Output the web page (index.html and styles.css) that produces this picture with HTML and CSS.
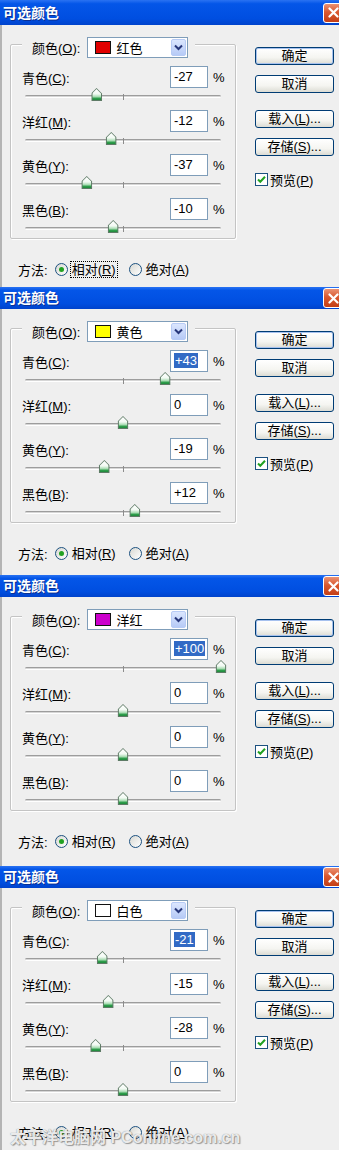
FILE: index.html
```html
<!DOCTYPE html>
<html lang="zh-CN">
<head>
  <meta charset="UTF-8">
  <meta name="viewport" content="width=device-width, initial-scale=1.0">
  <title>可选颜色</title>
  <link rel="stylesheet" href="styles.css">
</head>
<body>

  <!-- 1. 红色 -->
  <section class="dlg dlg-first">
    <div class="titlebar">
      <span class="title">可选颜色</span>
      <span class="close"><svg width="11" height="11" viewBox="0 0 11 11"><path d="M1.5 1.5 L9.5 9.5 M9.5 1.5 L1.5 9.5" stroke="#fff" stroke-width="2.2" stroke-linecap="round"/></svg></span>
    </div>
    <div class="body">
      <div class="main">
        <div class="group">
          <div class="legend">
            <span class="lbl">颜色(<u>O</u>):</span>
            <div class="select">
              <span class="swatch red"></span>
              <span class="sel-text">红色</span>
              <span class="arrow"><svg width="9" height="7" viewBox="0 0 9 7"><path d="M1 1.5 L4.5 5 L8 1.5" fill="none" stroke="#27377a" stroke-width="2"/></svg></span>
            </div>
          </div>
          <div class="rows">
            <div class="row">
              <div class="field"><span class="lbl">青色(<u>C</u>):</span><span class="input">-27</span><span class="pct">%</span></div>
              <div class="slider"><div class="track"><span class="tick"></span><span class="thumb" style="left: 36.5%"></span></div></div>
            </div>
            <div class="row">
              <div class="field"><span class="lbl">洋红(<u>M</u>):</span><span class="input">-12</span><span class="pct">%</span></div>
              <div class="slider"><div class="track"><span class="tick"></span><span class="thumb" style="left: 44%"></span></div></div>
            </div>
            <div class="row">
              <div class="field"><span class="lbl">黄色(<u>Y</u>):</span><span class="input">-37</span><span class="pct">%</span></div>
              <div class="slider"><div class="track"><span class="tick"></span><span class="thumb" style="left: 31.5%"></span></div></div>
            </div>
            <div class="row">
              <div class="field"><span class="lbl">黑色(<u>B</u>):</span><span class="input">-10</span><span class="pct">%</span></div>
              <div class="slider"><div class="track"><span class="tick"></span><span class="thumb" style="left: 45%"></span></div></div>
            </div>
          </div>
        </div>
        <div class="method">
          <span class="method-lbl">方法:</span>
          <span class="radio on"></span><span class="opt focus">相对(<u>R</u>)</span>
          <span class="radio second"></span><span class="opt">绝对(<u>A</u>)</span>
        </div>
      </div>
      <div class="side">
        <div class="btn btn-default">确定</div>
        <div class="btn">取消</div>
        <div class="btn btn-load">载入(<u>L</u>)...</div>
        <div class="btn">存储(<u>S</u>)...</div>
        <div class="check-row">
          <span class="check"><svg width="11" height="11" viewBox="0 0 11 11"><path d="M2 5.5 L4.3 7.8 L9 2.8" fill="none" stroke="#21a121" stroke-width="2"/></svg></span>
          <span class="check-lbl">预览(<u>P</u>)</span>
        </div>
      </div>
    </div>
  </section>

  <!-- 2. 黄色 -->
  <section class="dlg dlg-b">
    <div class="titlebar">
      <span class="title">可选颜色</span>
      <span class="close"><svg width="11" height="11" viewBox="0 0 11 11"><path d="M1.5 1.5 L9.5 9.5 M9.5 1.5 L1.5 9.5" stroke="#fff" stroke-width="2.2" stroke-linecap="round"/></svg></span>
    </div>
    <div class="body">
      <div class="main">
        <div class="group">
          <div class="legend">
            <span class="lbl">颜色(<u>O</u>):</span>
            <div class="select">
              <span class="swatch yellow"></span>
              <span class="sel-text">黄色</span>
              <span class="arrow"><svg width="9" height="7" viewBox="0 0 9 7"><path d="M1 1.5 L4.5 5 L8 1.5" fill="none" stroke="#27377a" stroke-width="2"/></svg></span>
            </div>
          </div>
          <div class="rows">
            <div class="row">
              <div class="field"><span class="lbl">青色(<u>C</u>):</span><span class="input"><span class="hl">+43</span></span><span class="pct">%</span></div>
              <div class="slider"><div class="track"><span class="tick"></span><span class="thumb" style="left: 71.5%"></span></div></div>
            </div>
            <div class="row">
              <div class="field"><span class="lbl">洋红(<u>M</u>):</span><span class="input">0</span><span class="pct">%</span></div>
              <div class="slider"><div class="track"><span class="tick"></span><span class="thumb" style="left: 50%"></span></div></div>
            </div>
            <div class="row">
              <div class="field"><span class="lbl">黄色(<u>Y</u>):</span><span class="input">-19</span><span class="pct">%</span></div>
              <div class="slider"><div class="track"><span class="tick"></span><span class="thumb" style="left: 40.5%"></span></div></div>
            </div>
            <div class="row">
              <div class="field"><span class="lbl">黑色(<u>B</u>):</span><span class="input">+12</span><span class="pct">%</span></div>
              <div class="slider"><div class="track"><span class="tick"></span><span class="thumb" style="left: 56%"></span></div></div>
            </div>
          </div>
        </div>
        <div class="method">
          <span class="method-lbl">方法:</span>
          <span class="radio on"></span><span class="opt">相对(<u>R</u>)</span>
          <span class="radio second"></span><span class="opt">绝对(<u>A</u>)</span>
        </div>
      </div>
      <div class="side">
        <div class="btn btn-default">确定</div>
        <div class="btn">取消</div>
        <div class="btn btn-load">载入(<u>L</u>)...</div>
        <div class="btn">存储(<u>S</u>)...</div>
        <div class="check-row">
          <span class="check"><svg width="11" height="11" viewBox="0 0 11 11"><path d="M2 5.5 L4.3 7.8 L9 2.8" fill="none" stroke="#21a121" stroke-width="2"/></svg></span>
          <span class="check-lbl">预览(<u>P</u>)</span>
        </div>
      </div>
    </div>
  </section>

  <!-- 3. 洋红 -->
  <section class="dlg dlg-c">
    <div class="titlebar">
      <span class="title">可选颜色</span>
      <span class="close"><svg width="11" height="11" viewBox="0 0 11 11"><path d="M1.5 1.5 L9.5 9.5 M9.5 1.5 L1.5 9.5" stroke="#fff" stroke-width="2.2" stroke-linecap="round"/></svg></span>
    </div>
    <div class="body">
      <div class="main">
        <div class="group">
          <div class="legend">
            <span class="lbl">颜色(<u>O</u>):</span>
            <div class="select">
              <span class="swatch magenta"></span>
              <span class="sel-text">洋红</span>
              <span class="arrow"><svg width="9" height="7" viewBox="0 0 9 7"><path d="M1 1.5 L4.5 5 L8 1.5" fill="none" stroke="#27377a" stroke-width="2"/></svg></span>
            </div>
          </div>
          <div class="rows">
            <div class="row">
              <div class="field"><span class="lbl">青色(<u>C</u>):</span><span class="input"><span class="hl">+100</span></span><span class="pct">%</span></div>
              <div class="slider"><div class="track"><span class="tick"></span><span class="thumb" style="left: 100%"></span></div></div>
            </div>
            <div class="row">
              <div class="field"><span class="lbl">洋红(<u>M</u>):</span><span class="input">0</span><span class="pct">%</span></div>
              <div class="slider"><div class="track"><span class="tick"></span><span class="thumb" style="left: 50%"></span></div></div>
            </div>
            <div class="row">
              <div class="field"><span class="lbl">黄色(<u>Y</u>):</span><span class="input">0</span><span class="pct">%</span></div>
              <div class="slider"><div class="track"><span class="tick"></span><span class="thumb" style="left: 50%"></span></div></div>
            </div>
            <div class="row">
              <div class="field"><span class="lbl">黑色(<u>B</u>):</span><span class="input">0</span><span class="pct">%</span></div>
              <div class="slider"><div class="track"><span class="tick"></span><span class="thumb" style="left: 50%"></span></div></div>
            </div>
          </div>
        </div>
        <div class="method">
          <span class="method-lbl">方法:</span>
          <span class="radio on"></span><span class="opt">相对(<u>R</u>)</span>
          <span class="radio second"></span><span class="opt">绝对(<u>A</u>)</span>
        </div>
      </div>
      <div class="side">
        <div class="btn btn-default">确定</div>
        <div class="btn">取消</div>
        <div class="btn btn-load">载入(<u>L</u>)...</div>
        <div class="btn">存储(<u>S</u>)...</div>
        <div class="check-row">
          <span class="check"><svg width="11" height="11" viewBox="0 0 11 11"><path d="M2 5.5 L4.3 7.8 L9 2.8" fill="none" stroke="#21a121" stroke-width="2"/></svg></span>
          <span class="check-lbl">预览(<u>P</u>)</span>
        </div>
      </div>
    </div>
  </section>

  <!-- 4. 白色 -->
  <section class="dlg dlg-d">
    <div class="titlebar">
      <span class="title">可选颜色</span>
      <span class="close"><svg width="11" height="11" viewBox="0 0 11 11"><path d="M1.5 1.5 L9.5 9.5 M9.5 1.5 L1.5 9.5" stroke="#fff" stroke-width="2.2" stroke-linecap="round"/></svg></span>
    </div>
    <div class="body">
      <div class="main">
        <div class="group">
          <div class="legend">
            <span class="lbl">颜色(<u>O</u>):</span>
            <div class="select">
              <span class="swatch white"></span>
              <span class="sel-text">白色</span>
              <span class="arrow"><svg width="9" height="7" viewBox="0 0 9 7"><path d="M1 1.5 L4.5 5 L8 1.5" fill="none" stroke="#27377a" stroke-width="2"/></svg></span>
            </div>
          </div>
          <div class="rows">
            <div class="row">
              <div class="field"><span class="lbl">青色(<u>C</u>):</span><span class="input"><span class="hl">-21</span></span><span class="pct">%</span></div>
              <div class="slider"><div class="track"><span class="tick"></span><span class="thumb" style="left: 39.5%"></span></div></div>
            </div>
            <div class="row">
              <div class="field"><span class="lbl">洋红(<u>M</u>):</span><span class="input">-15</span><span class="pct">%</span></div>
              <div class="slider"><div class="track"><span class="tick"></span><span class="thumb" style="left: 42.5%"></span></div></div>
            </div>
            <div class="row">
              <div class="field"><span class="lbl">黄色(<u>Y</u>):</span><span class="input">-28</span><span class="pct">%</span></div>
              <div class="slider"><div class="track"><span class="tick"></span><span class="thumb" style="left: 36%"></span></div></div>
            </div>
            <div class="row">
              <div class="field"><span class="lbl">黑色(<u>B</u>):</span><span class="input">0</span><span class="pct">%</span></div>
              <div class="slider"><div class="track"><span class="tick"></span><span class="thumb" style="left: 50%"></span></div></div>
            </div>
          </div>
        </div>
        <div class="method">
          <span class="method-lbl">方法:</span>
          <span class="radio on"></span><span class="opt">相对(<u>R</u>)</span>
          <span class="radio second"></span><span class="opt">绝对(<u>A</u>)</span>
        </div>
      </div>
      <div class="side">
        <div class="btn btn-default">确定</div>
        <div class="btn">取消</div>
        <div class="btn btn-load">载入(<u>L</u>)...</div>
        <div class="btn">存储(<u>S</u>)...</div>
        <div class="check-row">
          <span class="check"><svg width="11" height="11" viewBox="0 0 11 11"><path d="M2 5.5 L4.3 7.8 L9 2.8" fill="none" stroke="#21a121" stroke-width="2"/></svg></span>
          <span class="check-lbl">预览(<u>P</u>)</span>
        </div>
      </div>
      <div class="watermark">太平洋电脑网 PConline.com.cn</div>
    </div>
  </section>

</body>
</html>
```

FILE: styles.css
```css
html, body, * {
  font-family: "Liberation Sans", "Noto Sans CJK SC", sans-serif;
}
body {
  margin: 0;
  width: 339px;
  background-color: #efefef;
  font-size: 13px;
  color: #000;
  overflow: hidden;
}
u {
  text-underline-offset: 1px;
}

/* 窗口 */
.dlg {
  position: relative;
  overflow: hidden;
}
.titlebar {
  display: flex;
  align-items: center;
  justify-content: space-between;
  height: 22px;
  padding-left: 3px;
  background: linear-gradient(#2a72f2, #0456e8 15%, #004ee0 75%, #0043cc);
  overflow: hidden;
}
.dlg-first .titlebar {
  height: 25px;
}
.title {
  color: #fff;
  font-weight: bold;
  font-size: 14px;
  line-height: 1;
  text-shadow: 1px 1px 0 #0b2f91;
}
.close {
  display: flex;
  align-items: center;
  justify-content: center;
  width: 21px;
  height: 20px;
  margin-right: -5px;
  box-sizing: border-box;
  border: 1px solid #fff;
  border-radius: 3px;
  background: linear-gradient(#eb9273, #d9582f 45%, #c33e16);
}
.body {
  position: relative;
  display: flex;
  height: 262px;
  box-sizing: border-box;
  border-left: 2px solid #b4b4b4;
}
.dlg-b .body {
  height: 266px;
}
.dlg-c .body {
  height: 269px;
}

/* 左侧 */
.main {
  padding-left: 8px;
}
.group {
  width: 226px;
  margin-top: 19px;
  box-sizing: border-box;
  border: 1px solid #c4c4c4;
  border-radius: 2px;
  box-shadow: 1px 1px 0 #fff, inset 1px 1px 0 #fff;
}
.legend {
  display: flex;
  align-items: center;
  gap: 7px;
  width: fit-content;
  height: 21px;
  margin: -8px 0 0 11px;
  padding: 0 7px 0 10px;
  background-color: #efefef;
}
.select {
  display: flex;
  align-items: center;
  width: 101px;
  height: 21px;
  box-sizing: border-box;
  padding-left: 7px;
  border: 1px solid #7f9db9;
  background-color: #fff;
}
.swatch {
  width: 16px;
  height: 13px;
  box-sizing: border-box;
  margin-right: 5px;
  border: 1px solid #111;
}
.swatch.red { background-color: #e00000; }
.swatch.yellow { background-color: #ffff00; }
.swatch.magenta { background-color: #cc00cc; }
.swatch.white { background-color: #fff; }
.sel-text {
  flex: 1;
}
.arrow {
  display: flex;
  align-items: center;
  justify-content: center;
  width: 15px;
  height: 17px;
  box-sizing: border-box;
  margin-right: 1px;
  border: 1px solid #b7cbf5;
  border-radius: 2px;
  background: linear-gradient(#dbe6fe, #b6caf6);
}

.rows {
  display: flex;
  flex-direction: column;
  gap: 4px;
  margin-top: 8px;
}
.field {
  display: flex;
  align-items: center;
  height: 22px;
  padding-left: 11px;
}
.field .lbl {
  width: 148px;
}
.input {
  width: 38px;
  height: 22px;
  box-sizing: border-box;
  padding-left: 3px;
  border: 1px solid #7f9db9;
  background-color: #fff;
  line-height: 20px;
}
.hl {
  background-color: #316ac5;
  color: #fff;
  padding: 0 1px;
}
.pct {
  margin-left: 5px;
}
.slider {
  height: 18px;
  box-sizing: border-box;
  padding: 7px 0 0 14px;
}
.track {
  position: relative;
  width: 196px;
  height: 3px;
  box-sizing: border-box;
  border-top: 1px solid #9d9d9d;
  border-bottom: 1px solid #fff;
  border-radius: 2px;
  background-color: #d6d6d6;
}
.tick {
  position: absolute;
  left: 98px;
  top: -2px;
  width: 1px;
  height: 6px;
  background-color: #8c8c8c;
}
/* 滑块 */
.thumb {
  position: absolute;
  top: -8px;
  width: 11px;
  height: 13px;
  transform: translateX(-50%);
  background-color: #5e7b66;
  clip-path: polygon(50% 0, 100% 42%, 100% 100%, 0 100%, 0 42%);
}
.thumb::after {
  content: "";
  position: absolute;
  inset: 1px;
  background: linear-gradient(#fff, #f2faf3 45%, #a8dcb2 70%, #2f9e4c 85%, #1f8a3b);
  clip-path: polygon(50% 0, 100% 42%, 100% 100%, 0 100%, 0 42%);
}

.method {
  display: flex;
  align-items: center;
  height: 20px;
  margin-top: 20px;
  padding-left: 8px;
}
.method-lbl {
  margin-right: 7px;
}
.radio {
  display: flex;
  align-items: center;
  justify-content: center;
  width: 13px;
  height: 13px;
  box-sizing: border-box;
  border: 1px solid #1c5180;
  border-radius: 50%;
  background: linear-gradient(135deg, #d8d8d2, #fff);
}
.radio.on::after {
  content: "";
  width: 5px;
  height: 5px;
  border-radius: 50%;
  background-color: #21a121;
}
.radio.second {
  margin-left: 11px;
}
.opt {
  margin-left: 2px;
  padding: 0 1px;
  line-height: 15px;
  border: 1px solid transparent;
}
.opt.focus {
  border: 1px dotted #000;
}

/* 右侧按钮 */
.side {
  display: flex;
  flex-direction: column;
  margin-left: 19px;
  padding-top: 22px;
}
.btn {
  width: 79px;
  height: 18px;
  box-sizing: border-box;
  border: 1px solid #003c74;
  border-radius: 3px;
  background: linear-gradient(#fff, #f5f5f1 60%, #dcdcd4);
  text-align: center;
  line-height: 16px;
}
.btn + .btn {
  margin-top: 10px;
}
.btn-default {
  box-shadow: inset 0 0 0 1px #a6c1ee;
}
.btn.btn-load {
  margin-top: 17px;
}
.check-row {
  display: flex;
  align-items: center;
  gap: 2px;
  height: 14px;
  margin-top: 16px;
}
.check {
  display: flex;
  align-items: center;
  justify-content: center;
  width: 13px;
  height: 13px;
  box-sizing: border-box;
  border: 1px solid #1c5180;
  background-color: #fff;
}

/* 水印 */
.watermark {
  position: absolute;
  left: 8px;
  top: 236px;
  color: rgba(255, 255, 255, 0.85);
  font-size: 16px;
  font-weight: bold;
  white-space: nowrap;
  text-shadow: 0 0 1px #777, 1px 1px 1px rgba(0, 0, 0, 0.35);
}
```
